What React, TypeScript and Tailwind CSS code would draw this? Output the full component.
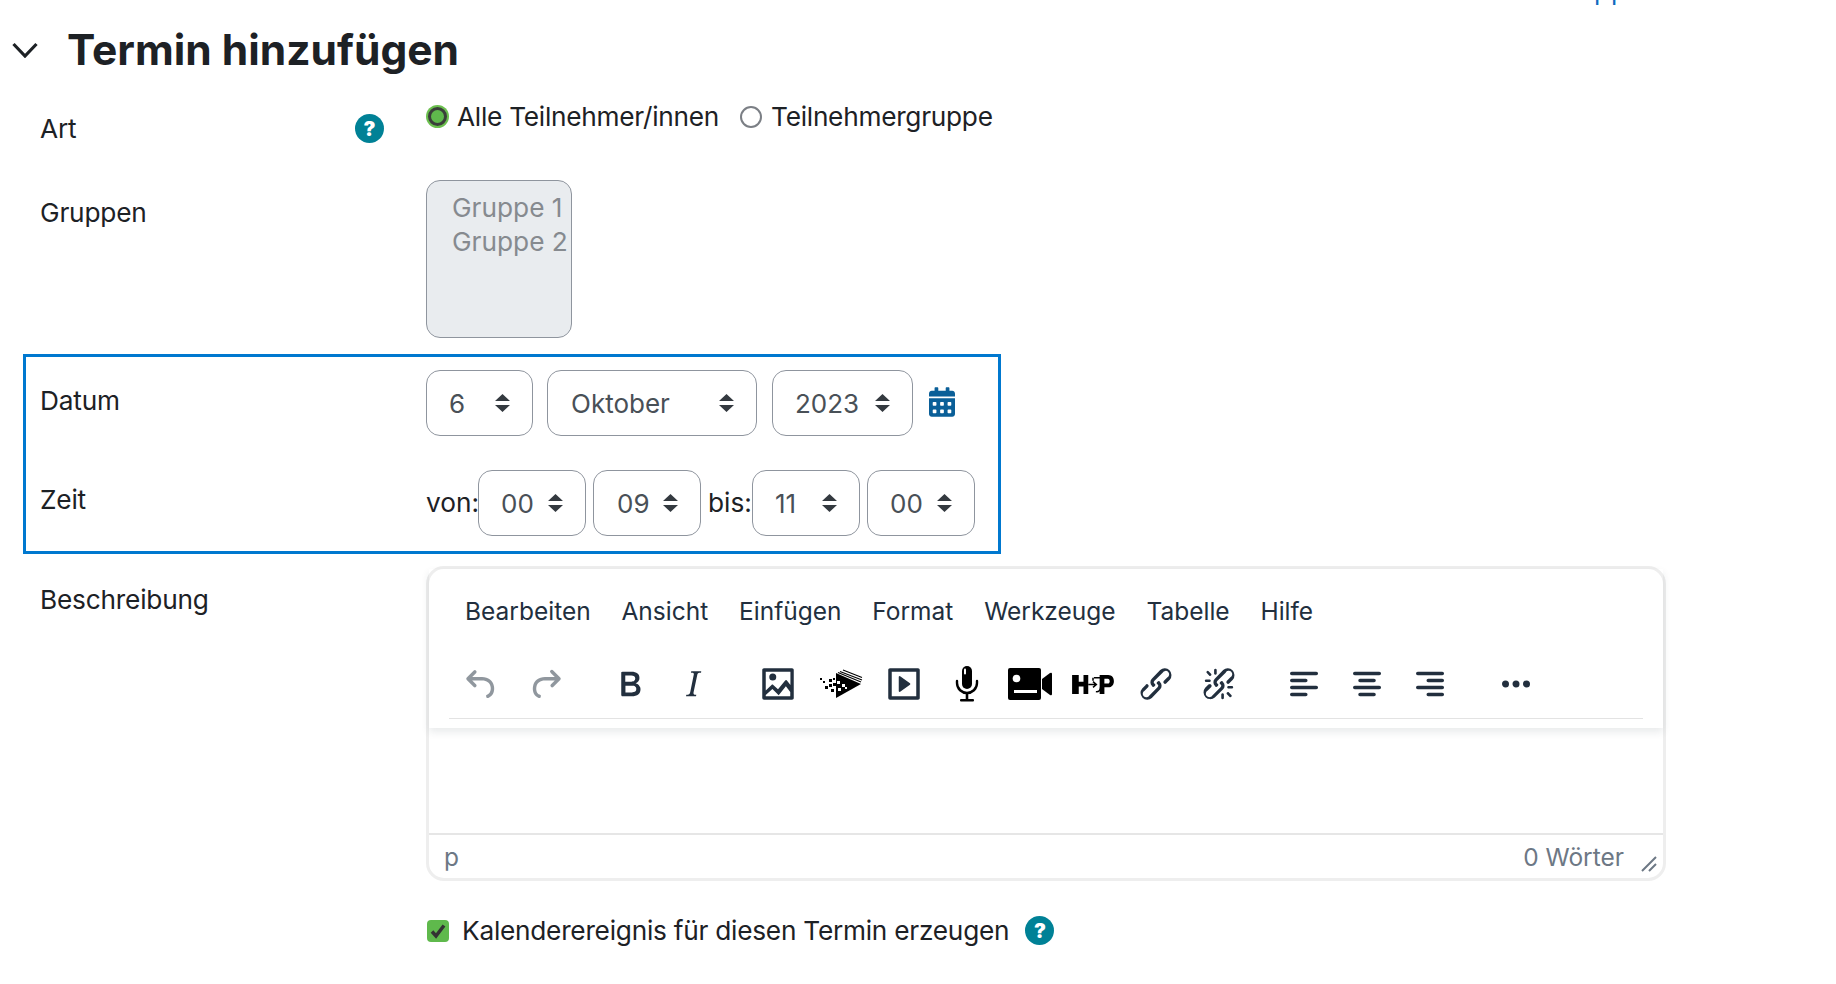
import React from "react";

const font = "[font-family:Inter,'Liberation_Sans',sans-serif]";

const Tiny = ({ d, className = "fill-[#222f3e]" }: { d: string; className?: string }) => (
  <svg viewBox="0 0 24 24" className={`h-[42px] w-[42px] ${className}`}>
    <path d={d} />
  </svg>
);

const paths = {
  undo: "M6.4 8H12c3.7 0 6.2 2 6.8 5.1.6 2.7-.4 5.6-2.9 6.7a1 1 0 1 1-.8-1.8c1.5-.7 2.2-2.8 1.8-4.5C16.5 11.4 14.8 10 12 10H6.4l2.3 2.3a1 1 0 0 1-1.4 1.4l-4-4a1 1 0 0 1 0-1.4l4-4a1 1 0 0 1 1.4 1.4L6.4 8Z",
  redo: "M17.6 10H12c-2.8 0-4.4 1.4-4.9 3.5-.4 2 .3 4 1.8 4.5a1 1 0 1 1-.8 1.8c-2.5-1.1-3.5-4-2.9-6.7C5.8 10 8.3 8 12 8h5.6l-2.3-2.3a1 1 0 1 1 1.4-1.4l4 4a1 1 0 0 1 0 1.4l-4 4a1 1 0 0 1-1.4-1.4l2.3-2.3Z",
  bold: "M7.8 19c-.3 0-.5 0-.6-.2l-.2-.5V5.700c0-.2 0-.4.2-.5l.6-.2h5c1.500 0 2.700.3 3.500 1 .7.6 1.100 1.400 1.100 2.500a3 3 0 0 1-.6 1.900c-.4.6-1 1-1.600 1.200.4.1.9.3 1.300.6s.8.7 1 1.200c.4.4.5 1 .5 1.600 0 1.300-.4 2.300-1.300 3-.8.7-2.100 1-3.800 1H7.800Zm5-8.300c.6 0 1.200-.1 1.600-.5.4-.3.6-.7.6-1.300 0-1.100-.8-1.700-2.300-1.700H9.300v3.500h3.400Zm.5 6c.7 0 1.300-.1 1.700-.4.4-.4.6-.9.6-1.500s-.2-1-.7-1.400c-.4-.3-1-.4-2-.4H9.400v3.800h4Z",
  italic: "M16.7 4.700l-.1.9h-.3c-.6 0-1 0-1.400.3-.3.3-.4.6-.5 1.100l-2.100 9.800v.6c0 .5.4.8 1.400.8h.2l-.2.8H8l.2-.8h.2c1.100 0 1.800-.5 2-1.500l2-9.800.1-.5c0-.6-.4-.8-1.400-.8h-.3l.2-.9h5.800Z",
  image:
    "M5 15.700l3.300-3.200c.3-.3.7-.3 1 0L12 15l4.100-5c.3-.4.8-.4 1 0l2 2.600V5H5v10.700ZM5 18.300V19h14v-2.500l-2.500-3.200-4.100 5.100-3.600-3.600L5 18.300ZM3 4c0-.6.4-1 1-1h16c.6 0 1 .4 1 1v16c0 .6-.4 1-1 1H4a1 1 0 0 1-1-1V4Zm6 6a2 2 0 1 1 0-4 2 2 0 0 1 0 4Z",
  media:
    "M4 3h16c.6 0 1 .4 1 1v16c0 .6-.4 1-1 1H4a1 1 0 0 1-1-1V4c0-.6.4-1 1-1Zm1 2v14h14V5H5Zm4.800 2.600l5.600 4a.5.5 0 0 1 0 .8l-5.600 4A.5.5 0 0 1 9 16V8a.5.5 0 0 1 .8-.4Z",
  link: "M6.200 12.300a1 1 0 0 1 1.400 1.400l-2.100 2.100a2 2 0 1 0 2.700 2.700l4.800-4.800a1 1 0 0 0 0-1.400 1 1 0 1 1 1.400-1.300 2.900 2.900 0 0 1 0 4L9.600 20a3.900 3.900 0 0 1-5.500-5.500l2-2Zm11.600-.6a1 1 0 0 1-1.400-1.400l2-2a2 2 0 1 0-2.600-2.800L11 10.300a1 1 0 0 0 0 1.400A1 1 0 1 1 9.600 13a2.900 2.900 0 0 1 0-4L14.400 4a3.900 3.900 0 0 1 5.500 5.500l-2 2Z",
  unlink:
    "M6.200 12.300a1 1 0 0 1 1.400 1.400l-2 2a2 2 0 1 0 2.600 2.800l4.800-4.800a1 1 0 0 0 0-1.400 1 1 0 1 1 1.400-1.300 2.900 2.900 0 0 1 0 4l-4.800 4.700a3.900 3.900 0 0 1-5.500-5.500l2-2Zm11.600-.6a1 1 0 0 1-1.400-1.400l2.100-2.100a2 2 0 1 0-2.700-2.700L11 10.300a1 1 0 0 0 0 1.400A1 1 0 1 1 9.600 13a2.900 2.900 0 0 1 0-4L14.400 4a3.900 3.900 0 0 1 5.500 5.500l-2 2ZM7.600 6.300a.8.8 0 0 1-1 1.100L4.900 5.600a.8.8 0 0 1 1-1.100l1.700 1.800ZM4.400 9.400h2.400a.8.8 0 0 1 0 1.500H4.400a.8.8 0 0 1 0-1.500ZM9.200 3.800a.8.8 0 0 1 1.500 0v2.400a.8.8 0 0 1-1.500 0V3.800ZM16.400 17.700a.8.8 0 0 1 1-1.100l1.800 1.800a.8.8 0 0 1-1 1.100l-1.800-1.800ZM19.600 14.600h-2.400a.8.8 0 0 1 0-1.500h2.400a.8.8 0 0 1 0 1.500ZM14.800 20.200a.8.8 0 0 1-1.500 0v-2.400a.8.8 0 0 1 1.500 0v2.400Z",
  left: "M5 5h14c.6 0 1 .4 1 1s-.4 1-1 1H5a1 1 0 1 1 0-2Zm0 4h8c.6 0 1 .4 1 1s-.4 1-1 1H5a1 1 0 1 1 0-2Zm0 8h8c.6 0 1 .4 1 1s-.4 1-1 1H5a1 1 0 0 1 0-2Zm0-4h14c.6 0 1 .4 1 1s-.4 1-1 1H5a1 1 0 0 1 0-2Z",
  center:
    "M5 5h14c.6 0 1 .4 1 1s-.4 1-1 1H5a1 1 0 1 1 0-2Zm3 4h8c.6 0 1 .4 1 1s-.4 1-1 1H8a1 1 0 1 1 0-2Zm0 8h8c.6 0 1 .4 1 1s-.4 1-1 1H8a1 1 0 0 1 0-2Zm-3-4h14c.6 0 1 .4 1 1s-.4 1-1 1H5a1 1 0 0 1 0-2Z",
  right:
    "M5 5h14c.6 0 1 .4 1 1s-.4 1-1 1H5a1 1 0 1 1 0-2Zm6 4h8c.6 0 1 .4 1 1s-.4 1-1 1h-8a1 1 0 0 1 0-2Zm0 8h8c.6 0 1 .4 1 1s-.4 1-1 1h-8a1 1 0 0 1 0-2Zm-6-4h14c.6 0 1 .4 1 1s-.4 1-1 1H5a1 1 0 0 1 0-2Z",
  more: "M6 10a2 2 0 0 0-2 2c0 1.100.9 2 2 2a2 2 0 0 0 2-2 2 2 0 0 0-2-2Zm12 0a2 2 0 0 0-2 2c0 1.100.9 2 2 2a2 2 0 0 0 2-2 2 2 0 0 0-2-2Zm-6 0a2 2 0 0 0-2 2c0 1.100.9 2 2 2a2 2 0 0 0 2-2 2 2 0 0 0-2-2Z",
};

const Swoosh = () => (
  <svg viewBox="0 0 44 30" className="h-[30px] w-[44px]">
    <path d="M17 4 L42 15 L17 29 Z" fill="#000" />
    <path d="M21 2.500 L43 11 M24 1 L43 8.500 M19 3.500 L42 13" stroke="#000" strokeWidth="1.100" fill="none" />
    <g fill="#000">
      <rect x="1" y="9" width="2" height="2" />
      <rect x="4" y="12" width="2" height="2" />
      <rect x="10" y="10" width="3" height="3" />
      <rect x="14" y="9" width="2" height="2" />
      <rect x="6" y="17" width="3" height="3" />
      <rect x="10" y="15" width="3" height="3" />
      <rect x="12" y="20" width="3" height="3" />
      <rect x="14" y="14" width="3" height="3" />
    </g>
    <g fill="#fff">
      <rect x="18" y="12" width="3" height="3" />
      <rect x="23" y="15" width="3" height="3" />
      <rect x="19" y="19" width="3" height="3" />
      <rect x="26" y="18" width="2" height="2" />
    </g>
  </svg>
);

const Mic = () => (
  <svg viewBox="0 0 24 36" className="h-[36px] w-[24px]">
    <rect x="7" y="0" width="10" height="23" rx="5" fill="#000" />
    <rect x="9" y="2.500" width="2" height="6" rx="1" fill="#fff" />
    <path d="M2 15 V17 C2 23 7 27 12 27 C17 27 22 23 22 17 V15" stroke="#000" strokeWidth="2.400" fill="none" strokeLinecap="round" />
    <path d="M12 27 V34" stroke="#000" strokeWidth="2.600" />
    <rect x="5" y="33" width="14" height="2.600" rx="1" fill="#000" />
  </svg>
);

const Video = () => (
  <svg viewBox="0 0 44 32" className="h-[32px] w-[44px]">
    <path d="M2 0 H31 Q33 0 33 2 V30 Q33 32 31 32 H2 Q0 32 0 30 V2 Q0 0 2 0 Z" fill="#000" />
    <path d="M34 11 L42 5 Q44 4 44 6 V26 Q44 28 42 27 L34 21 Z" fill="#000" />
    <circle cx="8.500" cy="10.500" r="3.800" fill="#fff" />
    <rect x="6" y="22" width="23" height="3" fill="#fff" />
  </svg>
);

const H5p = () => (
  <svg viewBox="0 0 44 20" className="h-[19px] w-[42px]">
    <path d="M0 0 H7 V7 H12 V0 H17 V20 H12 V12 H7 V20 H0 Z" fill="#000" />
    <path d="M17 10 H25 M22 7 L25.500 10 L22 13" stroke="#000" strokeWidth="1.600" fill="none" />
    <path d="M23 3 H30 M22 3 V6 M25 17.500 C28 18 30 16 30 13" stroke="#000" strokeWidth="1.600" fill="none" />
    <path d="M29 0 H38 C42 0 44 3 44 6.500 C44 10 42 13 38 13 H34 V20 H29 Z" fill="#000" />
    <path d="M34 4 V9 H37.500 C39 9 39.500 8 39.500 6.500 C39.500 5 39 4 37.500 4 Z" fill="#fff" />
  </svg>
);

const Btn = ({ children }: { children: React.ReactNode }) => (
  <div className="flex h-[60px] w-[63px] items-center justify-center">{children}</div>
);

const Help = () => (
  <span className="flex h-[29px] w-[29px] items-center justify-center rounded-full bg-[#008196] text-[20px] leading-none font-black text-white">
    ?
  </span>
);

const Sel = ({ value, w, pl }: { value: string; w: string; pl: string }) => (
  <div
    className={`flex h-[66px] items-center justify-between rounded-[14px] border border-[#8f959e] pr-[22px] text-[26px] text-[#495057] ${w} ${pl}`}
  >
    <span>{value}</span>
    <svg viewBox="0 0 15 18" className="h-[18px] w-[15px] fill-[#343a40]">
      <path d="M7.500 0 L15 7 H0 Z M0 11 H15 L7.500 18 Z" />
    </svg>
  </div>
);

const Label = ({ children, className = "" }: { children: React.ReactNode; className?: string }) => (
  <div className={`text-[26.25px] leading-[39px] tracking-[-0.2px] text-[#1d2125] ${className}`}>{children}</div>
);

const Radio = ({ checked }: { checked?: boolean }) =>
  checked ? (
    <span className="flex h-[23px] w-[23px] items-center justify-center rounded-full bg-[#6cc04f]">
      <span className="h-[19px] w-[19px] rounded-full border-[3px] border-[#3a3f3a] bg-[#5fb94c]" />
    </span>
  ) : (
    <span className="h-[22px] w-[22px] rounded-full border-2 border-[#7b7f85] bg-white" />
  );

export default function App() {
  return (
    <div className={`relative h-[984px] w-[1836px] overflow-hidden bg-white ${font}`}>
      <span className="absolute top-[-29px] left-[1594px] text-[26px] leading-[39px] tracking-[1px] text-[#0f6cbf]">pp</span>

      {/* heading */}
      <div className="flex h-[100px] items-center pl-[12px]">
        <svg viewBox="0 0 26 16" className="h-[16px] w-[26px]">
          <path d="M1.500 2 L13 14 L24.500 2" fill="none" stroke="#1d2125" strokeWidth="3.200" />
        </svg>
        <h3 className="ml-[29px] text-[42.5px] leading-none font-bold text-[#1d2125]">Termin hinzufügen</h3>
      </div>

      {/* Art */}
      <div className="flex h-[80px] pl-[40px]">
        <div className="flex w-[386px] items-start justify-between pt-[9px] pr-[42px]">
          <Label>Art</Label>
          <div className="pt-[5px]">
            <Help />
          </div>
        </div>
        <div className="-mt-[3px] flex items-start text-[26.25px] leading-[39px] tracking-[-0.27px] text-[#1d2125]">
          <div className="flex items-center gap-[8px]">
            <Radio checked />
            <span>Alle Teilnehmer/innen</span>
          </div>
          <div className="ml-[21px] flex items-center gap-[9px]">
            <Radio />
            <span>Teilnehmergruppe</span>
          </div>
        </div>
      </div>

      {/* Gruppen */}
      <div className="flex h-[174px] pl-[40px]">
        <div className="w-[386px] pt-[13px]">
          <Label>Gruppen</Label>
        </div>
        <div className="h-[158px] w-[146px] overflow-hidden rounded-[14px] border border-[#8f959e] bg-[#e9ecef] pt-[10px] pl-[25px] text-[26.25px] leading-[34px] whitespace-nowrap text-[#868a8f]">
          <div>Gruppe 1</div>
          <div>Gruppe 2</div>
        </div>
      </div>

      {/* Datum und Zeit */}
      <div className="ml-[23px] h-[200px] w-[978px] border-[3px] border-[#0078cf] pl-[14px]">
        <div className="flex h-[113px] pt-[13px]">
          <div className="w-[386px] pt-[11px]">
            <Label>Datum</Label>
          </div>
          <div className="flex items-start">
            <Sel value="6" w="w-[107px]" pl="pl-[22px]" />
            <div className="ml-[14px]">
              <Sel value="Oktober" w="w-[210px]" pl="pl-[23px]" />
            </div>
            <div className="ml-[15px]">
              <Sel value="2023" w="w-[141px]" pl="pl-[22px]" />
            </div>
            <svg viewBox="0 0 448 512" className="mt-[17px] ml-[16px] h-[30px] w-[26px] fill-[#0a5f98]">
              <path d="M0 464c0 26.500 21.500 48 48 48h352c26.500 0 48-21.500 48-48V192H0v272zm320-196c0-6.600 5.400-12 12-12h40c6.600 0 12 5.400 12 12v40c0 6.600-5.400 12-12 12h-40c-6.600 0-12-5.400-12-12v-40zm0 128c0-6.600 5.400-12 12-12h40c6.600 0 12 5.400 12 12v40c0 6.600-5.400 12-12 12h-40c-6.600 0-12-5.400-12-12v-40zM192 268c0-6.600 5.400-12 12-12h40c6.600 0 12 5.400 12 12v40c0 6.600-5.400 12-12 12h-40c-6.600 0-12-5.400-12-12v-40zm0 128c0-6.600 5.400-12 12-12h40c6.600 0 12 5.400 12 12v40c0 6.600-5.400 12-12 12h-40c-6.600 0-12-5.400-12-12v-40zM64 268c0-6.600 5.400-12 12-12h40c6.600 0 12 5.400 12 12v40c0 6.600-5.400 12-12 12H76c-6.600 0-12-5.400-12-12v-40zm0 128c0-6.600 5.400-12 12-12h40c6.600 0 12 5.400 12 12v40c0 6.600-5.400 12-12 12H76c-6.600 0-12-5.400-12-12v-40zM400 64h-48V16c0-8.800-7.200-16-16-16h-32c-8.800 0-16 7.200-16 16v48H160V16c0-8.800-7.200-16-16-16h-32c-8.800 0-16 7.200-16 16v48H48C21.500 64 0 85.500 0 112v48h448v-48c0-26.500-21.500-48-48-48z" />
            </svg>
          </div>
        </div>
        <div className="flex">
          <div className="w-[386px] pt-[10px]">
            <Label>Zeit</Label>
          </div>
          <div className="flex items-center text-[26.25px] text-[#1d2125]">
            <span className="w-[52px]">von:</span>
            <Sel value="00" w="w-[108px]" pl="pl-[22px]" />
            <div className="ml-[7px]">
              <Sel value="09" w="w-[108px]" pl="pl-[23px]" />
            </div>
            <span className="w-[51px] pl-[7px]">bis:</span>
            <Sel value="11" w="w-[108px]" pl="pl-[22px]" />
            <div className="ml-[7px]">
              <Sel value="00" w="w-[108px]" pl="pl-[22px]" />
            </div>
          </div>
        </div>
      </div>

      {/* Beschreibung */}
      <div className="mt-[12px] flex pl-[40px]">
        <div className="w-[386px] pt-[14px]">
          <Label>Beschreibung</Label>
        </div>
        <div className="h-[315px] w-[1240px] rounded-[18px] border-[3px] border-[#eeeeee]">
          <div className="relative h-[159px] shadow-[0_4px_8px_rgba(34,47,62,0.1)]">
            <div className="flex h-[76px] items-center gap-[30.8px] pt-[8px] pl-[36px] text-[24.5px] text-[#222f3e]">
              <span>Bearbeiten</span>
              <span>Ansicht</span>
              <span>Einfügen</span>
              <span>Format</span>
              <span>Werkzeuge</span>
              <span>Tabelle</span>
              <span>Hilfe</span>
            </div>
            <div className="mx-[20px] flex h-[74px] items-start border-b border-[#e3e3e3] pt-[9px] pl-[1px]">
              <Btn><Tiny d={paths.undo} className="fill-[#222f3e]/50" /></Btn>
              <Btn><Tiny d={paths.redo} className="fill-[#222f3e]/50" /></Btn>
              <div className="w-[22px]" />
              <Btn><Tiny d={paths.bold} /></Btn>
              <Btn><Tiny d={paths.italic} /></Btn>
              <div className="w-[22px]" />
              <Btn><Tiny d={paths.image} /></Btn>
              <Btn><Swoosh /></Btn>
              <Btn><Tiny d={paths.media} /></Btn>
              <Btn><Mic /></Btn>
              <Btn><Video /></Btn>
              <Btn><H5p /></Btn>
              <Btn><Tiny d={paths.link} /></Btn>
              <Btn><Tiny d={paths.unlink} /></Btn>
              <div className="w-[22px]" />
              <Btn><Tiny d={paths.left} /></Btn>
              <Btn><Tiny d={paths.center} /></Btn>
              <Btn><Tiny d={paths.right} /></Btn>
              <div className="w-[23px]" />
              <Btn><Tiny d={paths.more} /></Btn>
            </div>
          </div>
          <div className="h-[105px]" />
          <div className="flex h-[45px] items-center justify-between border-t-2 border-[#e6e6e6] pt-[2px] pr-[6px] pl-[15px] text-[24.5px] text-[#6d7885]">
            <span>p</span>
            <div className="flex items-center gap-[17px]">
              <span>0 Wörter</span>
              <svg viewBox="0 0 16 16" className="mt-[12px] h-[16px] w-[16px]">
                <path d="M1 15 L15 1 M8 15 L15 8" stroke="#6d7885" strokeWidth="2" fill="none" />
              </svg>
            </div>
          </div>
        </div>
      </div>

      {/* Kalender */}
      <div className="mt-[30px] ml-[427px] flex items-center text-[26.25px] leading-[39px] tracking-[-0.25px] text-[#1d2125]">
        <span className="flex h-[22px] w-[22px] items-center justify-center rounded-[4px] bg-[#5fb94c]">
          <svg viewBox="0 0 16 16" className="h-[16px] w-[16px]">
            <path d="M2 8.500 L6 13 L14 2.500" fill="none" stroke="#333" strokeWidth="3.500" />
          </svg>
        </span>
        <span className="ml-[13px]">Kalenderereignis für diesen Termin erzeugen</span>
        <span className="ml-[16px]">
          <Help />
        </span>
      </div>
    </div>
  );
}
